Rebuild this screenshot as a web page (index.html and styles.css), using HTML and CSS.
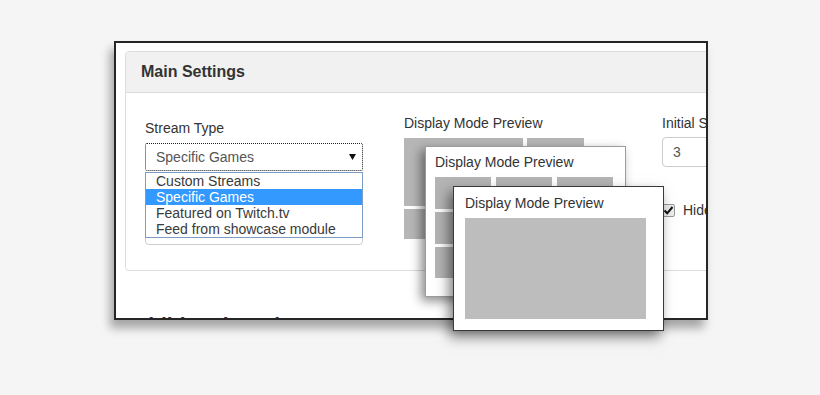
FILE: index.html
```html
<!DOCTYPE html>
<html>
<head>
<meta charset="utf-8">
<link rel="stylesheet" href="styles.css">
</head>
<body>
<div class="stage">
  <div class="frame">
    <div class="panel">
      <div class="panel-heading">Main Settings</div>
      <div class="panel-body">
        <div class="col col-first">
          <div class="label">Stream Type</div>
          <div class="select">
            <span>Specific Games</span>
            <svg class="arrow" width="7" height="6" viewBox="0 0 7 6"><polygon points="0,0 7,0 3.5,6" fill="#111"/></svg>
            <ul class="dropdown">
              <li>Custom Streams</li>
              <li class="active">Specific Games</li>
              <li>Featured on Twitch.tv</li>
              <li>Feed from showcase module</li>
            </ul>
          </div>
          <div class="games"></div>
        </div>
        <div class="col">
          <div class="label">Display Mode Preview</div>
          <div class="mini-grid">
            <div class="cell"></div><div class="cell"></div>
            <div class="cell"></div><div class="cell"></div>
          </div>
        </div>
        <div class="col">
          <div class="label nowrap">Initial Streams</div>
          <div class="input">3</div>
          <div class="check-row">
            <span class="checkbox"><svg width="11" height="11" viewBox="0 0 11 11"><path d="M1.5 5.5 L4.2 8.3 L9.5 2" stroke="#111" stroke-width="2" fill="none"/></svg></span>
            <span class="nowrap">Hide offline streams</span>
          </div>
        </div>
      </div>
    </div>
    <div class="section-title">Additional Settings</div>
  </div>

  <div class="win win2">
    <div class="win-title">Display Mode Preview</div>
    <div class="grid9">
      <div class="cell"></div><div class="cell"></div><div class="cell"></div>
      <div class="cell"></div><div class="cell"></div><div class="cell"></div>
      <div class="cell"></div><div class="cell"></div><div class="cell"></div>
    </div>
  </div>

  <div class="win win3">
    <div class="win-title">Display Mode Preview</div>
    <div class="single"></div>
  </div>
</div>
</body>
</html>
```

FILE: styles.css
```css
* { box-sizing: border-box; }
html, body { margin: 0; padding: 0; }
body {
  background: #f5f5f5;
  font-family: "Liberation Sans", Arial, sans-serif;
  color: #333;
}
.stage {
  position: relative;
  width: 820px;
  height: 395px;
  padding: 41px 0 0 114px;
  overflow: hidden;
}
.frame {
  position: relative;
  width: 594px;
  height: 279px;
  border: 2px solid #262626;
  background: #fff;
  overflow: hidden;
  padding: 8px 0 0 9px;
  box-shadow: -4px 8px 9px rgba(0,0,0,0.33);
}
.panel {
  width: 640px;
  border: 1px solid #dcdcdc;
  border-radius: 4px;
  background: #fff;
}
.panel-heading {
  height: 41px;
  background: #f1f1f1;
  border-bottom: 1px solid #dcdcdc;
  border-radius: 3px 3px 0 0;
  padding: 0 15px;
  display: flex;
  align-items: center;
  font-weight: bold;
  font-size: 16px;
  color: #333;
}
.panel-body {
  display: grid;
  grid-template-columns: 259px 258px 1fr;
  padding: 20px 0 25px 19px;
  font-size: 14px;
}
.col-first { padding-top: 5px; }
.label {
  line-height: 20px;
  height: 20px;
  margin-bottom: 5px;
  color: #333;
}
.nowrap { white-space: nowrap; }
.select {
  position: relative;
  width: 218px;
  height: 28px;
  border: 1px dotted #222;
  border-radius: 2px;
  padding-left: 10px;
  display: flex;
  align-items: center;
  color: #555;
}
.arrow {
  position: absolute;
  right: 6px;
  top: 10px;
}
.dropdown {
  position: absolute;
  left: -1px;
  top: 28px;
  width: 218px;
  margin: 0;
  padding: 0;
  list-style: none;
  background: #fff;
  border: 1px solid #7d9cc4;
  z-index: 2;
}
.dropdown li {
  height: 16px;
  line-height: 16px;
  padding-left: 10px;
  color: #3a3a3a;
  white-space: nowrap;
}
.dropdown li.active {
  background: #3399ff;
  color: #fff;
}
.games {
  margin-top: 40px;
  width: 218px;
  height: 34px;
  border: 1px solid #ccc;
  border-radius: 4px;
}
.mini-grid {
  display: grid;
  grid-template-columns: 119px 57px;
  grid-template-rows: 68px 30px;
  gap: 3px 4px;
}
.mini-grid .cell { background: #b6b6b6; }
.input {
  width: 240px;
  height: 30px;
  margin-top: -1px;
  border: 1px solid #ccc;
  border-radius: 4px;
  padding-left: 10px;
  display: flex;
  align-items: center;
  color: #555;
}
.check-row {
  margin-top: 36px;
  display: flex;
  align-items: center;
  gap: 8px;
  height: 14px;
  color: #333;
}
.checkbox {
  width: 13px;
  height: 13px;
  flex: none;
  border: 1px solid #9a9a9a;
  border-radius: 2px;
  background: #ececec;
  display: flex;
  align-items: center;
  justify-content: center;
}
.section-title {
  margin: 42px 0 0 1px;
  font-weight: bold;
  font-size: 21px;
  line-height: 24px;
  color: #333;
  white-space: nowrap;
}
.win {
  position: absolute;
  background: #fff;
  font-size: 14px;
}
.win-title {
  line-height: 20px;
  height: 20px;
  margin-bottom: 5px;
  color: #333;
  white-space: nowrap;
}
.win2 {
  left: 425px;
  top: 146px;
  width: 201px;
  height: 151px;
  border: 1px solid #9c9c9c;
  padding: 5px 0 0 9px;
  box-shadow: -4px 4px 10px rgba(0,0,0,0.45);
}
.grid9 {
  display: grid;
  grid-template-columns: 56px 56px 56px;
  grid-template-rows: 32px 32px 31px;
  gap: 3px 5px;
}
.grid9 .cell { background: #b4b4b4; }
.win3 {
  left: 453px;
  top: 186px;
  width: 211px;
  height: 145px;
  border: 1px solid #3a3a3a;
  padding: 6px 0 0 11px;
  box-shadow: -4px 6px 12px rgba(0,0,0,0.5);
}
.single {
  width: 181px;
  height: 101px;
  background: #bdbdbd;
}
```
